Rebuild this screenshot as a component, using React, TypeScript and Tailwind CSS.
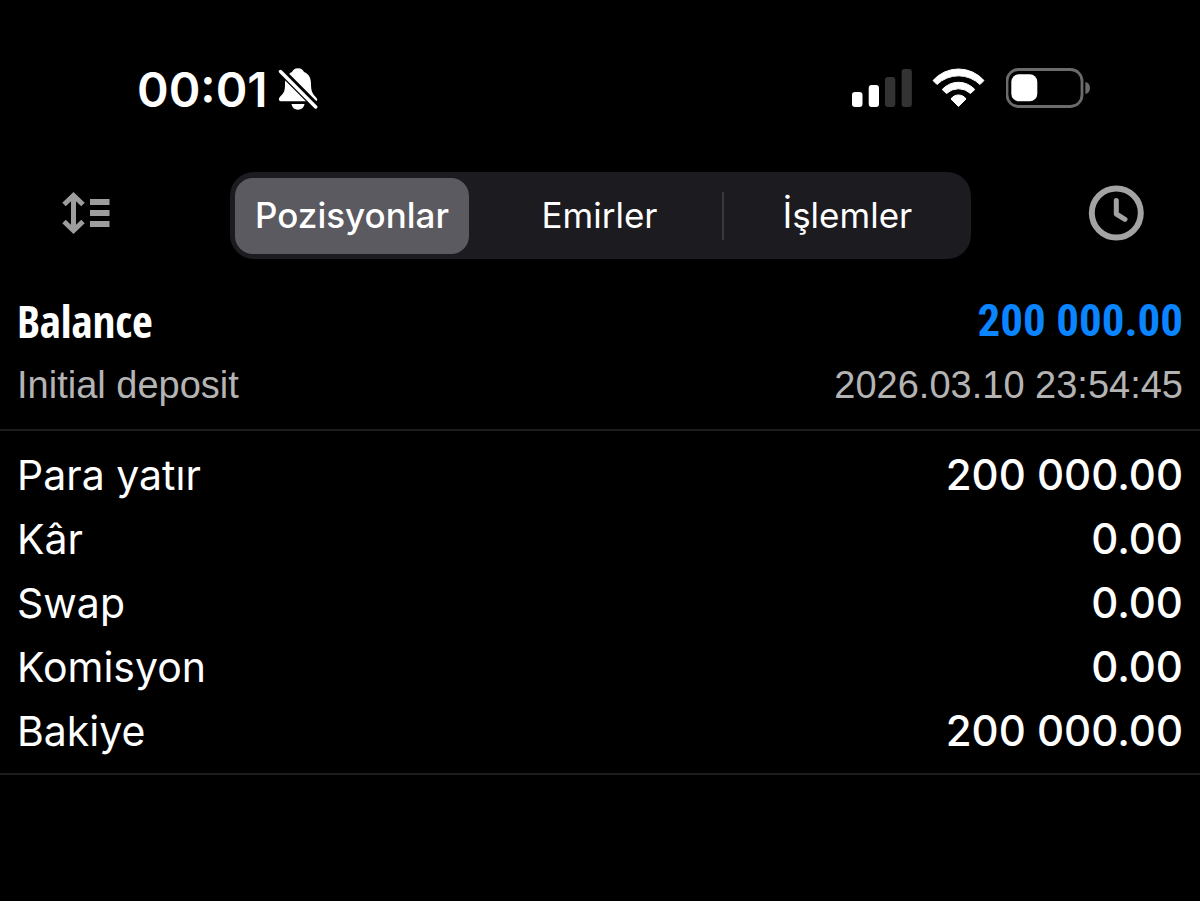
import { useState } from "react";

const TABS = ["Pozisyonlar", "Emirler", "İşlemler"];

const SUMMARY = [
  { label: "Para yatır", value: "200 000.00" },
  { label: "Kâr", value: "0.00" },
  { label: "Swap", value: "0.00" },
  { label: "Komisyon", value: "0.00" },
  { label: "Bakiye", value: "200 000.00" },
];

function BellOffIcon() {
  return (
    <svg className="h-11 w-10" viewBox="0 0 40 44" aria-hidden="true">
      <path
        d="M20 2.3 C23.5 2.3 25.3 4.3 26 6 C31 8 33 12 33 18 C33 26 35 28 38.5 32 C40 34 39 35.3 37 35.3 H3.5 C1 35.3 0 33.5 1.8 31 C6 27 7 25 7 18 C7 12 9.5 8 14 6 C14.7 4.3 16.5 2.3 20 2.3 Z M13.5 38 H26.5 C26 41.5 23.5 43.7 20 43.7 C16.5 43.7 14 41.5 13.5 38 Z"
        fill="#fff"
      />
      <path d="M2 4 L39 41" stroke="#000" strokeWidth="7.5" />
      <path d="M2.5 5.5 L37.7 41" stroke="#fff" strokeWidth="3.4" strokeLinecap="round" />
    </svg>
  );
}

function SignalIcon() {
  return (
    <svg className="h-10 w-[60px]" viewBox="0 0 60 40" aria-hidden="true">
      <rect x="0" y="24" width="10.5" height="15" rx="3" fill="#fff" />
      <rect x="16.7" y="17" width="10.3" height="22" rx="3" fill="#fff" />
      <rect x="33" y="9" width="10.3" height="30" rx="3" fill="#333" />
      <rect x="49.6" y="1" width="10.3" height="38" rx="3" fill="#333" />
    </svg>
  );
}

function WifiIcon() {
  return (
    <svg className="h-10 w-[54px]" viewBox="0 0 54 40" fill="#fff" stroke="#fff" strokeWidth="1" strokeLinejoin="round" aria-hidden="true">
      <path d="M1 12.5 A34 34 0 0 1 52 12.5 L48 16.5 A31 31 0 0 0 5 16.5 Z" />
      <path d="M10.2 21.5 A22 22 0 0 1 42.8 21.5 L38.5 25.5 A17.5 17.5 0 0 0 14.5 25.5 Z" />
      <path d="M19 31 A9 9 0 0 1 34 31 L26.5 38.5 Z" />
    </svg>
  );
}

function BatteryIcon() {
  return (
    <svg className="h-10 w-[85px]" viewBox="1 0 85 40" aria-hidden="true">
      <rect x="2" y="1.5" width="75" height="37" rx="11.5" fill="none" stroke="#6b6b6b" strokeWidth="2.8" />
      <rect x="6.3" y="6.3" width="26" height="27" rx="7.5" fill="#fff" />
      <path d="M80.3 14 C83.5 14.5 85 17 85 20 C85 23 83.5 25.5 80.3 26 Z" fill="#6b6b6b" />
    </svg>
  );
}

function SortIcon() {
  return (
    <svg className="size-14" viewBox="0 0 56 56" aria-hidden="true">
      <g fill="none" stroke="#9d9d9d" strokeWidth="5">
        <path d="M8 19.5 L17.5 10.5 L27 19.5" />
        <path d="M8 36.5 L17.5 45.5 L27 36.5" />
        <path d="M17.5 11 V45" />
      </g>
      <path d="M34 14 H53.5 V20 H34 Z M34 25 H53.5 V31 H34 Z M34 36 H53.5 V42 H34 Z" fill="#9d9d9d" />
    </svg>
  );
}

function ClockIcon() {
  return (
    <svg className="size-14" viewBox="0 0 56 56" fill="none" stroke="#a3a3a3" aria-hidden="true">
      <circle cx="28.3" cy="28" r="24.5" strokeWidth="6" />
      <path d="M28.3 15.5 V29 L37 34.3" strokeWidth="5" strokeLinecap="round" strokeLinejoin="round" />
    </svg>
  );
}

function StatusBar() {
  return (
    <div className="flex h-16 items-center justify-between pr-[109px] pl-[137px]">
      <div className="flex items-center gap-2.5">
        <span className="pt-1 text-5xl leading-16 font-semibold">00:01</span>
        <BellOffIcon />
      </div>
      <div className="flex items-center gap-5">
        <SignalIcon />
        <WifiIcon />
        <BatteryIcon />
      </div>
    </div>
  );
}

export default function App() {
  const [active, setActive] = useState(0);

  return (
    <div className="min-h-screen bg-black pt-14 font-['Inter','Noto_Sans',sans-serif] text-white">
      <StatusBar />

      <nav className="mt-13 flex items-center px-14">
        <button type="button" aria-label="Sırala" className="pb-1.5">
          <SortIcon />
        </button>
        <div role="tablist" className="mr-[117px] ml-[118px] grid h-[87px] flex-1 grid-cols-3 rounded-3xl bg-[#1c1b20]">
          {TABS.map((tab, i) => (
            <button
              key={tab}
              type="button"
              role="tab"
              aria-selected={active === i}
              onClick={() => setActive(i)}
              className="flex items-center"
            >
              <span
                className={
                  active === i
                    ? "mr-2 ml-[5px] flex h-[76px] flex-1 items-center justify-center rounded-[18px] bg-[#5b5a60] text-[35px] font-medium"
                    : "flex h-[76px] flex-1 items-center justify-center text-[35px]"
                }
              >
                {tab}
              </span>
              {i === 1 && <span className="h-12 w-0.5 bg-[#3a393e]" />}
            </button>
          ))}
        </div>
        <button type="button" aria-label="Geçmiş" className="pb-1.5">
          <ClockIcon />
        </button>
      </nav>

      <main>
        <section className="mt-[30px] border-b-2 border-[#1c1c1c] px-[17px] pb-3 leading-16">
          <div className="flex justify-between text-[45px] font-bold">
            <h1 className="font-['Open_Sans_Condensed','Roboto_Condensed',sans-serif]">Balance</h1>
            <span className="font-['Roboto_Condensed','Open_Sans_Condensed',sans-serif] text-[#0a84ff]">200 000.00</span>
          </div>
          <div className="flex justify-between font-['Liberation_Sans',sans-serif] text-[38px] text-[#b4b4b4]">
            <span>Initial deposit</span>
            <time dateTime="2026-03-10T23:54:45">2026.03.10 23:54:45</time>
          </div>
        </section>

        <dl className="border-b-2 border-[#1c1c1c] px-[17px] pt-3 pb-2.5 leading-16">
          {SUMMARY.map((row) => (
            <div key={row.label} className="flex justify-between">
              <dt className="text-[41px]">{row.label}</dt>
              <dd className="text-[42px] font-medium">{row.value}</dd>
            </div>
          ))}
        </dl>
      </main>
    </div>
  );
}
